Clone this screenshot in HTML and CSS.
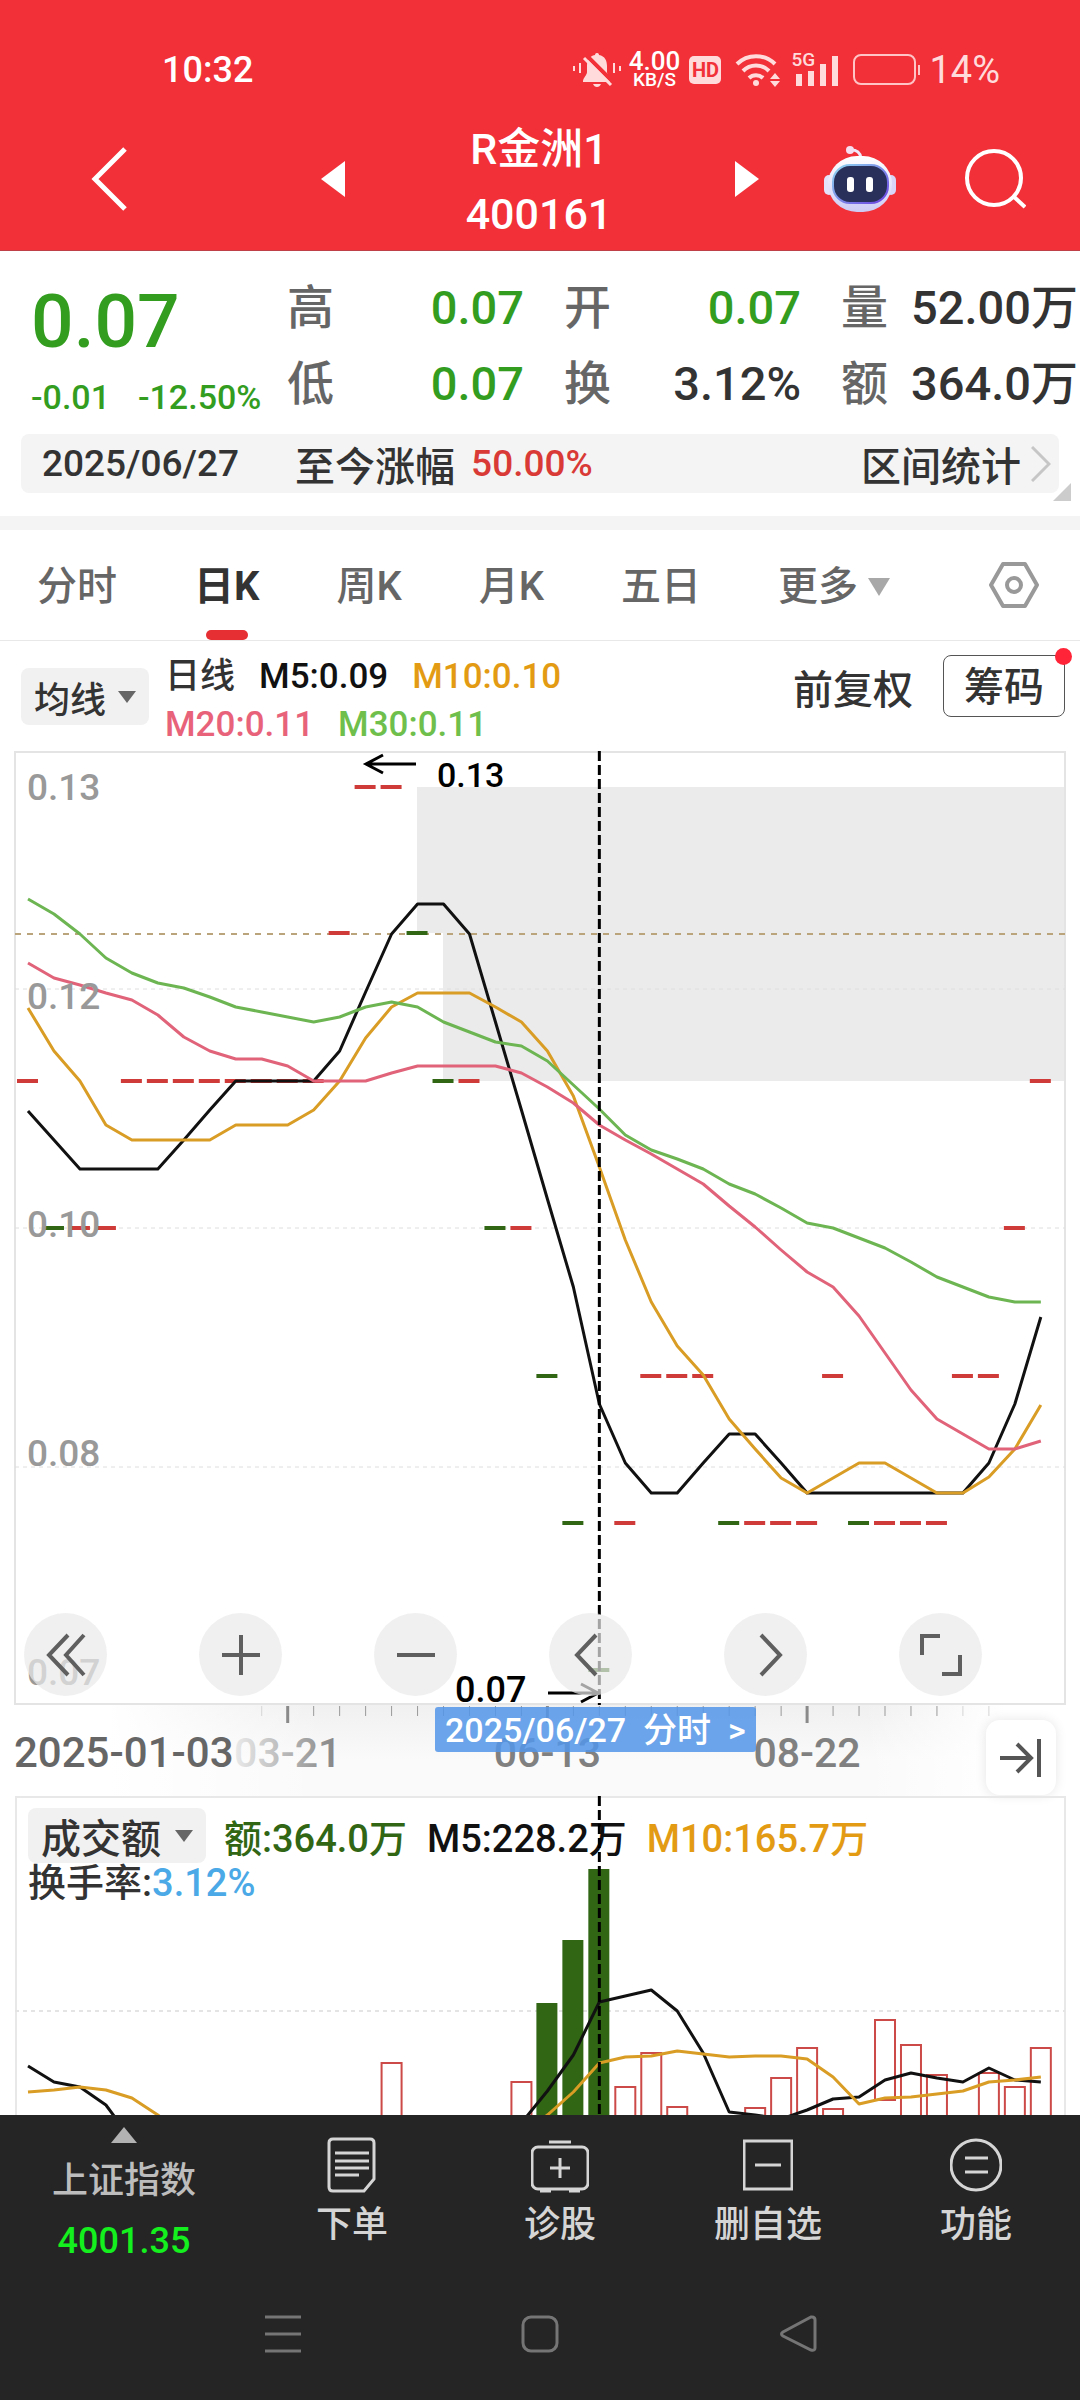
FILE: index.html
```html
<!DOCTYPE html>
<html lang="zh-CN">
<head>
<meta charset="utf-8">
<meta name="viewport" content="width=device-width, initial-scale=1">
<title>R金洲1 400161</title>
<link rel="stylesheet" href="styles.css">
</head>
<body>
<header class="top">
  <div class="status">
    <time class="clock">10:32</time>
    <div class="status-icons">
      <svg width="48" height="36" viewBox="0 0 48 36" fill="#ffdbdc" aria-hidden="true">
        <path d="M24 1c2 0 2 2 2 2 6 1 8 6 8 11v6c0 3 4 6 4 9v1H10v-1c0-3 4-6 4-9v-6c0-5 2-10 8-11 0 0 0-2 2-2z"/>
        <path d="M20 32h8c-1 2-2 3-4 3s-3-1-4-3z"/>
        <path d="M13 3l28 28" stroke="#f13038" stroke-width="4"/>
        <path d="M11 6l27 27" stroke="#ffdbdc" stroke-width="3"/>
        <path d="M1 14v5M7 11v10M41 11v10M47 14v5" stroke="#ffdbdc" stroke-width="2"/>
      </svg>
      <div class="rate"><span class="rate-num">4.00</span><span class="rate-unit">KB/S</span></div>
      <span class="hd">HD</span>
      <svg class="wifi" width="46" height="36" viewBox="0 0 46 36" fill="none" stroke="#ffdbdc" stroke-width="4" aria-hidden="true">
        <path d="M2 12a27 27 0 0 1 38 0M8 19a18 18 0 0 1 26 0M14 26a10 10 0 0 1 14 0"/>
        <circle cx="21" cy="31" r="3" fill="#ffdbdc" stroke="none"/>
        <path d="M35 27l5-6 5 6zM35 29l5 6 5-6z" fill="#ffdbdc" stroke="none"/>
      </svg>
      <div class="signal">
        <span class="net">5G</span>
        <svg width="46" height="30" viewBox="0 0 46 30" fill="#ffdbdc" aria-hidden="true"><path d="M3 18h6v12H3zM15 15h6v15h-6zM27 8h6v22h-6zM39 0h6v30h-6z"/></svg>
      </div>
      <svg class="battery" width="68" height="32" viewBox="0 0 68 32" fill="none" stroke="#ffc4c6" stroke-width="2" aria-hidden="true">
        <rect x="1" y="1" width="61" height="29" rx="7"/><path d="M66 11v10"/>
      </svg>
      <span class="percent">14%</span>
    </div>
  </div>
  <div class="titlebar">
    <button class="icon-btn back" aria-label="返回"><svg width="36" height="66" viewBox="0 0 36 66" fill="none" stroke="#fff" stroke-width="5"><path d="M34 3L4 33l30 30"/></svg></button>
    <button class="icon-btn" aria-label="上一只"><svg width="24" height="36" viewBox="0 0 24 36" fill="#fff"><path d="M24 0v36L0 18z"/></svg></button>
    <h1 class="title"><span>R金洲1</span><span>400161</span></h1>
    <button class="icon-btn" aria-label="下一只"><svg width="24" height="36" viewBox="0 0 24 36" fill="#fff"><path d="M0 0v36l24-18z"/></svg></button>
    <button class="icon-btn robot" aria-label="智能助手"><svg width="72" height="67" viewBox="0 0 72 67">
      <defs>
        <linearGradient id="shell" x1="0" y1="0" x2="0" y2="1"><stop offset="0" stop-color="#fff"/><stop offset="1" stop-color="#cdcbf5"/></linearGradient>
        <linearGradient id="rim" x1="0" y1="0" x2="1" y2="1"><stop offset="0" stop-color="#8fd8f0"/><stop offset="1" stop-color="#6a3fe0"/></linearGradient>
      </defs>
      <path d="M27 4c6 0 9 2 10 8" fill="none" stroke="#f0e9fb" stroke-width="3"/>
      <circle cx="26" cy="4" r="4" fill="#f6dff0"/>
      <rect x="0" y="29" width="10" height="20" rx="5" fill="#e4e2fb"/><rect x="62" y="29" width="10" height="20" rx="5" fill="#d8d5f8"/>
      <rect x="4" y="10" width="64" height="56" rx="29" fill="url(#shell)"/>
      <rect x="9" y="19" width="55" height="38" rx="17" fill="#29315a" stroke="url(#rim)" stroke-width="2"/>
      <rect x="23" y="31" width="7" height="15" rx="3" fill="#fff"/><rect x="42" y="31" width="7" height="15" rx="3" fill="#fff"/>
    </svg></button>
    <button class="icon-btn" aria-label="搜索"><svg width="62" height="60" viewBox="0 0 62 60" fill="none" stroke="#fff" stroke-width="4"><circle cx="30" cy="29" r="27"/><path d="M49 47l12 11"/></svg></button>
  </div>
</header>

<section class="quote">
  <div class="last">
    <strong class="price">0.07</strong>
    <div class="change"><span>-0.01</span><span>-12.50%</span></div>
  </div>
  <dl class="stats">
    <div><dt>高</dt><dd class="down">0.07</dd></div>
    <div><dt>开</dt><dd class="down">0.07</dd></div>
    <div><dt>量</dt><dd>52.00万</dd></div>
    <div><dt>低</dt><dd class="down">0.07</dd></div>
    <div><dt>换</dt><dd>3.12%</dd></div>
    <div><dt>额</dt><dd>364.0万</dd></div>
  </dl>
</section>

<section class="range">
  <div class="range-bar">
    <time>2025/06/27</time>
    <span class="range-label">至今涨幅</span>
    <span class="range-value">50.00%</span>
    <a class="range-link" href="#">区间统计<svg width="20" height="36" viewBox="0 0 20 36" fill="none" stroke="#c6c6c6" stroke-width="3"><path d="M1 1l17 17L1 35"/></svg></a>
  </div>
  <svg class="fold" width="18" height="18" viewBox="0 0 18 18" fill="#ccc" aria-hidden="true"><path d="M18 0v18H0z"/></svg>
</section>

<nav class="tabs">
  <a href="#">分时</a>
  <a href="#" class="active">日K</a>
  <a href="#">周K</a>
  <a href="#">月K</a>
  <a href="#">五日</a>
  <a href="#" class="more">更多<svg width="22" height="18" viewBox="0 0 22 18" fill="#a8a8a8"><path d="M0 0h22L11 18z"/></svg></a>
  <button class="icon-btn" aria-label="设置"><svg width="50" height="46" viewBox="0 0 50 46" fill="none" stroke="#999" stroke-width="4" stroke-linejoin="round"><path d="M14 2h22l12 21-12 21H14L2 23z"/><circle cx="25" cy="23" r="7"/></svg></button>
</nav>

<section class="legend">
  <button class="chip">均线<svg width="18" height="12" viewBox="0 0 18 12" fill="#666"><path d="M0 0h18L9 12z"/></svg></button>
  <div class="averages">
    <div><span class="c-text">日线</span><span class="c-m5">M5:0.09</span><span class="c-m10">M10:0.10</span></div>
    <div><span class="c-m20">M20:0.11</span><span class="c-m30">M30:0.11</span></div>
  </div>
  <a class="adjust" href="#">前复权</a>
  <button class="chips-btn">筹码</button>
</section>

<main class="charts">
  <div class="price-chart">
    <svg id="price" viewBox="0 751 1080 954" role="img" aria-label="日K线图"></svg>
    <div class="tools">
      <button aria-label="快退"><svg width="40" height="44" viewBox="0 0 40 44"><path d="M22 2L3 22l19 20M38 2L20 22l18 20"/></svg></button>
      <button aria-label="放大"><svg width="40" height="40" viewBox="0 0 40 40"><path d="M20 0v40M1 20h38"/></svg></button>
      <button aria-label="缩小"><svg width="40" height="40" viewBox="0 0 40 40"><path d="M1 20h38"/></svg></button>
      <button aria-label="左移"><svg width="40" height="44" viewBox="0 0 40 44"><path d="M25 2L6 22l19 20"/></svg></button>
      <button aria-label="右移"><svg width="40" height="44" viewBox="0 0 40 44"><path d="M15 2l19 20-19 20"/></svg></button>
      <button aria-label="全屏"><svg width="42" height="44" viewBox="0 0 42 44"><path d="M2 22V3h18M40 22v19H22"/></svg></button>
    </div>
  </div>
  <div class="axis">
    <svg id="axis" viewBox="0 1705 1080 91" role="img" aria-label="日期轴"></svg>
    <a class="cursor-tag" href="#">2025/06/27&nbsp; 分时&nbsp; &gt;</a>
    <button class="jump" aria-label="最新"><svg width="42" height="40" viewBox="0 0 42 40" fill="none" stroke="#555" stroke-width="4"><path d="M0 20h30M17 6l14 14-14 14M39 1v38"/></svg></button>
  </div>
  <div class="volume-chart">
    <div class="volume-legend">
      <div><button class="chip small">成交额<svg width="18" height="12" viewBox="0 0 18 12" fill="#666"><path d="M0 0h18L9 12z"/></svg></button><span class="c-vol">额:364.0万</span><span class="c-m5">M5:228.2万</span><span class="c-m10">M10:165.7万</span></div>
      <p class="turnover">换手率:<span>3.12%</span></p>
    </div>
    <svg id="volume" viewBox="0 1796 1080 319" role="img" aria-label="成交额图"></svg>
  </div>
</main>

<footer class="bottom">
  <nav class="actions">
    <a class="index" href="#">
      <svg width="26" height="16" viewBox="0 0 26 16" fill="#b2b2b2"><path d="M13 0l13 16H0z"/></svg>
      <span>上证指数</span><span class="index-value">4001.35</span>
    </a>
    <a href="#"><svg width="50" height="56" viewBox="0 0 50 56"><path d="M6 2h37q4 0 4 4v36L37 54H6q-4 0-4-4V6q0-4 4-4zM8 16h34M8 24h34M8 31h34M8 38h24"/></svg>下单</a>
    <a href="#"><svg width="58" height="56" viewBox="0 0 58 56"><rect x="1" y="10" width="56" height="42" rx="6"/><path d="M18 5h22M9 54h11M38 54h11M29 21v20M19 31h20"/></svg>诊股</a>
    <a href="#"><svg width="50" height="56" viewBox="0 0 50 56"><rect x="1" y="4" width="48" height="48"/><path d="M12 28h26"/></svg>删自选</a>
    <a href="#"><svg width="52" height="56" viewBox="0 0 52 56"><circle cx="26" cy="28" r="25"/><path d="M15 21h23M15 35h23"/></svg>功能</a>
  </nav>
  <nav class="system">
    <button class="icon-btn" aria-label="最近任务"><svg width="36" height="38" viewBox="0 0 36 38"><path d="M0 2h36M0 19h36M0 36h36"/></svg></button>
    <button class="icon-btn" aria-label="主屏幕"><svg width="38" height="38" viewBox="0 0 38 38"><rect x="2" y="2" width="34" height="34" rx="8"/></svg></button>
    <button class="icon-btn" aria-label="返回上级"><svg width="38" height="38" viewBox="0 0 38 38"><path d="M33 2q3 0 3 3v28q0 3-4 2L4 21q-3-2 0-4L32 2z"/></svg></button>
  </nav>
</footer>
<script src="chart.js"></script>
</body>
</html>
```

FILE: styles.css
```css
* { box-sizing: border-box; }
body {
  margin: 0;
  min-height: 100vh;
  display: flex;
  flex-direction: column;
  background: #fff;
  color: #333;
  font-family: Roboto, "Noto Sans CJK SC", sans-serif;
  font-size: 40px;
  font-weight: 500;
  overflow-x: hidden;
}
a { color: inherit; text-decoration: none; }
button { font: inherit; color: inherit; border: 0; background: none; padding: 0; }
svg { display: block; flex: none; }
dl, dd, p, h1 { margin: 0; }
.icon-btn { display: flex; align-items: center; justify-content: center; }

/* header */
.top { background: #f13038; color: #fff; padding-top: 40px; border-bottom: 1px solid #c04048; }
.status { display: flex; justify-content: space-between; align-items: center; height: 60px; padding: 0 80px 0 162px; font-size: 36px; }
.status-icons { display: flex; align-items: center; color: #ffdbdc; }
.rate { display: flex; flex-direction: column; align-items: center; width: 54px; margin: 0 8px 0 6px; color: #fff; }
.rate-num { font-size: 26px; line-height: 20px; }
.rate-unit { font-size: 19px; line-height: 18px; }
.hd { width: 32px; height: 28px; border-radius: 5px; background: #ffdbdc; color: #f13038; font-size: 20px; font-weight: 700; line-height: 28px; text-align: center; }
.wifi { margin: 0 8px 0 14px; }
.signal { position: relative; padding: 2px 0 0 4px; }
.net { position: absolute; left: 2px; top: -4px; font-size: 19px; line-height: 20px; }
.battery { margin: 0 8px 0 14px; }
.percent { font-size: 38px; font-weight: 400; }
.titlebar { display: grid; grid-template-columns: 278fr 110fr 302fr 114fr 112fr 158fr 6fr; align-items: center; height: 150px; padding-top: 8px; }
.back { justify-content: flex-start; padding-left: 91px; }
.title { padding-top: 6px; font-size: 43px; line-height: 65px; font-weight: 500; text-align: center; }
.title span { display: block; white-space: nowrap; }

/* quote */
.quote { display: flex; padding: 19px 2px 12px 0; }
.last { width: 287px; flex: none; padding-left: 31px; color: #339d1f; white-space: nowrap; }
.price { display: block; font-size: 75px; line-height: 102px; font-weight: 500; }
.change { display: flex; gap: 28px; font-size: 34px; line-height: 50px; }
.stats { flex: 1; display: grid; grid-template-columns: repeat(3, 1fr); column-gap: 40px; font-size: 47px; line-height: 76px; }
.stats div { display: flex; justify-content: space-between; white-space: nowrap; }
.stats dt { color: #666; }
.stats .down { color: #339d1f; }

.range { position: relative; padding: 0 21px 23px; border-bottom: 14px solid #f4f4f4; }
.range-bar { display: flex; align-items: center; height: 59px; padding: 0 8px 0 21px; background: #f4f4f4; border-radius: 8px; }
.range-bar time, .range-value { font-size: 37px; }
.range-label { margin: 0 16px 0 56px; }
.range-value { color: #d93a36; }
.range-link { display: flex; align-items: center; gap: 10px; margin-left: auto; }
.fold { position: absolute; right: 9px; bottom: 15px; }

/* tabs */
.tabs { display: flex; justify-content: space-between; align-items: center; height: 111px; padding: 0 41px 0 37px; border-bottom: 1px solid #e8e8e8; color: #666; }
.tabs a { position: relative; line-height: 106px; padding-top: 4px; }
.tabs .active { color: #333; font-weight: 700; }
.tabs .active::after { content: ""; position: absolute; left: 50%; bottom: 0; width: 42px; height: 10px; margin-left: -21px; border-radius: 5px; background: #e62f33; }
.tabs .more { display: flex; align-items: center; gap: 10px; margin-right: 22px; }

/* moving-average legend */
.legend { display: flex; align-items: center; height: 110px; padding: 0 15px 0 21px; }
.chip { display: flex; align-items: center; gap: 12px; height: 57px; padding: 0 13px; margin-top: 1px; border-radius: 8px; background: #f1f1f1; font-size: 36px; white-space: nowrap; }
.averages { flex: 1; padding: 10px 0 0 16px; font-size: 35px; line-height: 48px; white-space: nowrap; }
.averages div { display: flex; gap: 24px; }
.adjust { margin: 0 30px 18px 0; }
.chips-btn { position: relative; width: 122px; height: 62px; margin-bottom: 20px; border: 1px solid #555; border-radius: 8px; line-height: 64px; }
.chips-btn::after { content: ""; position: absolute; right: -8px; top: -8px; width: 17px; height: 17px; border-radius: 50%; background: #ff2438; }
.c-m5 { color: #111; }
.c-m10 { color: #e39b14; }
.c-m20 { color: #e8637a; }
.c-m30 { color: #6fbf4c; }
.c-vol { color: #306614; }

/* charts */
.charts svg[id] { width: 100%; height: auto; }
.charts text { font-family: Roboto, "Noto Sans CJK SC", sans-serif; font-weight: 500; }
#price { overflow: visible; }
.price-chart, .axis, .volume-chart { position: relative; }
.price-chart { z-index: 1; }
.tools { position: absolute; left: 24px; right: 98px; bottom: 9px; display: flex; justify-content: space-between; }
.tools button { display: flex; align-items: center; justify-content: center; width: 83px; height: 83px; border-radius: 50%; background: rgba(234, 234, 234, 0.7); }
.tools svg, .actions svg, .system svg { fill: none; stroke: #5f5f5f; stroke-width: 4; }
.axis { background: linear-gradient(90deg, #fff 10%, rgba(255, 255, 255, 0) 30%, rgba(255, 255, 255, 0) 80%, #fff 93%), linear-gradient(#f0f0f0, #fafafa 60%); }
.cursor-tag { position: absolute; left: 435px; top: 2px; height: 45px; padding: 0 10px; border-radius: 3px; background: rgba(84, 150, 232, 0.86); color: #fff; font-size: 34px; line-height: 47px; white-space: nowrap; }
.jump { position: absolute; right: 24px; top: 15px; display: flex; align-items: center; justify-content: center; width: 70px; height: 75px; border-radius: 14px; background: #fff; box-shadow: 0 0 12px rgba(0, 0, 0, 0.1); }
.volume-legend { position: absolute; left: 28px; top: 12px; font-size: 38px; white-space: nowrap; }
.volume-legend div { display: flex; align-items: center; gap: 20px; height: 55px; }
.chip.small { height: 55px; margin: 0 -2px 0 0; font-size: 40px; gap: 14px; }
.turnover { line-height: 40px; }
.turnover span { color: #4aa9e6; }
#volume { position: relative; }

/* bottom */
.bottom { flex: 1; background: #252525; color: #d5d5d5; font-size: 36px; }
.actions { display: grid; grid-template-columns: 248fr 208fr 208fr 208fr 208fr; height: 170px; padding-top: 22px; }
.actions a { display: flex; flex-direction: column; align-items: center; line-height: 64px; }
.actions svg { stroke: #d5d5d5; stroke-width: 3; }
.actions .index { margin-top: -10px; color: #bdbdbd; line-height: 60px; }
.actions .index svg { fill: #b2b2b2; stroke: none; margin-bottom: 8px; }
.actions .index-value { color: #14f01e; }
.system { display: flex; justify-content: center; gap: 220px; padding: 30px 0 0 2px; }
.system svg { stroke: #757575; stroke-width: 3; }
```

FILE: chart.js
```js
const NS = "http://www.w3.org/2000/svg";
const STEP = 25.97;
const x = i => 28 + i * STEP;
const RED = "#cf3b38", GREEN = "#306614";

function add(parent, tag, attrs, text) {
  const el = document.createElementNS(NS, tag);
  for (const k in attrs) el.setAttribute(k, attrs[k]);
  if (text) el.textContent = text;
  parent.appendChild(el);
}
function line(svg, x1, y1, x2, y2, stroke, width, dash) {
  add(svg, "path", { d: `M${x1} ${y1}L${x2} ${y2}`, fill: "none", stroke, "stroke-width": width, "stroke-dasharray": dash || "none" });
}
function series(svg, ys, stroke, from = 0) {
  const points = ys.map((y, i) => `${x(i + from)},${y}`).join(" ");
  add(svg, "polyline", { points, fill: "none", stroke, "stroke-width": 3, "stroke-linejoin": "round" });
}

/* price */
const price = document.getElementById("price");
add(price, "path", { d: "M417 787H1066V1081H443V933H417z", fill: "#ebebeb" });
add(price, "rect", { x: 15, y: 752, width: 1050, height: 952, fill: "none", stroke: "#e4e4e4", "stroke-width": 2 });
[989, 1228, 1467].forEach(y => line(price, 15, y, 1065, y, "#dedede", 1, "4 4"));
line(price, 15, 934, 1065, 934, "#b9a47c", 2, "6 6");
const candles = [
  [787, [13, 14], []],
  [933, [12], [15]],
  [1081, [0, 4, 5, 6, 7, 8, 9, 10, 11, 17, 39], [16]],
  [1228, [2, 3, 19, 38], [1, 18]],
  [1376, [24, 25, 26, 31, 36, 37], [20]],
  [1523, [23, 28, 29, 30, 33, 34, 35], [21, 27, 32]],
  [1670, [], [22]]
];
candles.forEach(([y, reds, greens]) => {
  reds.forEach(i => add(price, "rect", { x: x(i) - 11, y: y - 2, width: 21, height: 4, fill: RED }));
  greens.forEach(i => add(price, "rect", { x: x(i) - 11, y: y - 2, width: 21, height: 4, fill: GREEN }));
});
series(price, [1111, 1140, 1169, 1169, 1169, 1169, 1140, 1110, 1081, 1081, 1081, 1081, 1051, 992, 934, 904, 904, 934, 1022, 1110, 1199, 1287, 1404, 1463, 1493, 1493, 1463, 1434, 1434, 1463, 1493, 1493, 1493, 1493, 1493, 1493, 1493, 1463, 1404, 1317], "#111");
series(price, [1008, 1051, 1081, 1125, 1140, 1140, 1140, 1140, 1125, 1125, 1125, 1110, 1081, 1038, 1007, 993, 993, 993, 1007, 1022, 1051, 1096, 1167, 1240, 1302, 1346, 1375, 1419, 1449, 1478, 1493, 1478, 1463, 1463, 1478, 1493, 1493, 1477, 1449, 1405], "#d99c24");
series(price, [963, 978, 985, 993, 1000, 1015, 1037, 1051, 1059, 1059, 1066, 1081, 1081, 1081, 1073, 1066, 1066, 1066, 1066, 1073, 1087, 1103, 1125, 1140, 1154, 1169, 1184, 1206, 1227, 1250, 1272, 1287, 1316, 1353, 1390, 1419, 1434, 1449, 1449, 1441], "#e0637a");
series(price, [899, 914, 934, 958, 973, 983, 988, 997, 1007, 1012, 1017, 1022, 1017, 1007, 1002, 1007, 1022, 1032, 1042, 1046, 1061, 1085, 1109, 1135, 1150, 1159, 1169, 1184, 1194, 1208, 1223, 1228, 1238, 1248, 1262, 1277, 1287, 1297, 1302, 1302], "#6cb552");
[["0.13", 800], ["0.12", 1009], ["0.10", 1237], ["0.08", 1466], ["0.07", 1685]].forEach(([t, y]) =>
  add(price, "text", { x: 27, y, "font-size": 37, fill: "#999" }, t));
line(price, x(22), 751, x(22), 1705, "#000", 3, "10 4");
add(price, "path", { d: "M416 764H366M383 755L366 764L383 773M548 1693H598M581 1684L598 1693L581 1702", fill: "none", stroke: "#000", "stroke-width": 3 });
add(price, "text", { x: 437, y: 787, "font-size": 34, fill: "#000" }, "0.13");
add(price, "text", { x: 455, y: 1702, "font-size": 36, fill: "#000" }, "0.07");

/* date axis */
const axis = document.getElementById("axis");
for (let i = 9; i <= 37; i++) {
  const major = i % 10 === 0;
  const fade = i === 9 || i > 35;
  line(axis, x(i), 1706, x(i), major ? 1723 : 1716, major ? "#8a8a8a" : fade ? "#d5d5d5" : "#999", major ? 3 : 1);
}
add(axis, "text", { x: 14, y: 1767, "font-size": 42, fill: "#666" }, "2025-01-03");
const fadeFill = document.createElementNS(NS, "linearGradient");
fadeFill.id = "date-fade";
add(fadeFill, "stop", { offset: 0, "stop-color": "#eaeaea" });
add(fadeFill, "stop", { offset: 0.45, "stop-color": "#bbb" });
add(fadeFill, "stop", { offset: 1, "stop-color": "#808080" });
axis.appendChild(fadeFill);
[["03-21", "url(#date-fade)"], ["06-13", "#808080"], ["08-22", "#808080"]].forEach(([t, fill], k) =>
  add(axis, "text", { x: x(10 * (k + 1)), y: 1767, "font-size": 41, "text-anchor": "middle", fill }, t));

/* turnover */
const volume = document.getElementById("volume");
add(volume, "path", { d: "M16 2115V1797H1065V2115", fill: "none", stroke: "#e8e8e8", "stroke-width": 2 });
line(volume, 15, 2011, 1065, 2011, "#e4e4e4", 2, "4 4");
[[20, 2003], [21, 1940], [22, 1869]].forEach(([i, y]) =>
  add(volume, "rect", { x: x(i) - 11, y, width: 21, height: 2116 - y, fill: GREEN }));
[[14, 2063], [19, 2082], [23, 2087], [24, 2053], [25, 2107], [28, 2108], [29, 2078], [30, 2048], [31, 2109], [33, 2020], [34, 2045], [35, 2075], [37, 2073], [38, 2087], [39, 2048]].forEach(([i, y]) =>
  add(volume, "rect", { x: x(i) - 10, y, width: 20, height: 80, fill: "none", stroke: "#cc4a47", "stroke-width": 2 }));
series(volume, [2066, 2082, 2087, 2105, 2140], "#111");
series(volume, [2123, 2091, 2055, 2002, 1996, 1990, 2011, 2053, 2112, 2115, 2119, 2110, 2099, 2097, 2080, 2073, 2078, 2082, 2068, 2080, 2082], "#111", 19);
series(volume, [2092, 2090, 2087, 2090, 2098, 2115, 2135], "#d99c24");
series(volume, [2135, 2115, 2092, 2063, 2057, 2056, 2051, 2054, 2057, 2056, 2056, 2059, 2077, 2104, 2098, 2097, 2094, 2091, 2082, 2080, 2077], "#d99c24", 19);
line(volume, x(22), 1796, x(22), 2115, "#000", 3, "10 4");
```
